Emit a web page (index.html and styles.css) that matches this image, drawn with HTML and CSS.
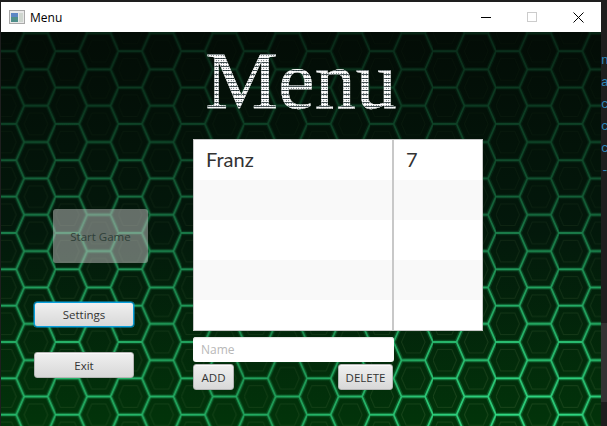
FILE: index.html
```html
<!DOCTYPE html>
<html lang="en">
<head>
<meta charset="utf-8">
<title>Menu</title>
<link rel="stylesheet" href="styles.css">
</head>
<body>
<div class="desktop">
  <div class="window">
    <header class="titlebar">
      <svg class="app-icon" width="16" height="14" viewBox="0 0 16 14">
        <rect x="0.5" y="0.5" width="15" height="13" fill="#e8e8e8" stroke="#a9a9a9"/>
        <rect x="2" y="3" width="7" height="9" fill="#4f8f8a"/>
        <rect x="2" y="3" width="7" height="4" fill="#5c86c4"/>
        <rect x="10" y="3" width="4" height="9" fill="#cfd6cf"/>
      </svg>
      <span class="window-title">Menu</span>
      <div class="controls">
        <span class="control"><svg width="10" height="10" viewBox="0 0 10 10"><path d="M0 5.5H10" stroke="#000" fill="none"/></svg></span>
        <span class="control"><svg width="10" height="10" viewBox="0 0 10 10"><rect x="0.5" y="0.5" width="9" height="9" stroke="#cccccc" fill="none"/></svg></span>
        <span class="control"><svg width="11" height="11" viewBox="0 0 11 11"><path d="M0.5 0.5L10.5 10.5M10.5 0.5L0.5 10.5" stroke="#000" fill="none"/></svg></span>
      </div>
    </header>
    <main class="scene">
      <svg class="backdrop" width="600" height="394" viewBox="0 0 600 394" aria-hidden="true">
        <defs>
          <pattern id="hex" width="62.9" height="36.35" patternUnits="userSpaceOnUse" patternTransform="translate(54.6 19.2)">
            <path d="M4.7 7.27H18.8L23.5 18.17L18.8 29.07H4.7L0 18.17Z M36.2 -10.9H50.2L55 0L50.2 10.9H36.2L31.4 0Z M36.2 25.45H50.2L55 36.35L50.2 47.25H36.2L31.4 36.35Z" fill="none" stroke="#6f8a58" stroke-opacity="0.25" stroke-width="1"/>
            <path d="M0 0H23.5L31.45 18.17H54.95L62.9 0M23.5 0L31.45 -18.17M54.95 18.17L62.9 36.35M0 36.35H23.5L31.45 18.17" fill="none" stroke="#22b868" stroke-opacity="0.35" stroke-width="4.5"/>
            <path d="M0 0H23.5L31.45 18.17H54.95L62.9 0M23.5 0L31.45 -18.17M54.95 18.17L62.9 36.35M0 36.35H23.5L31.45 18.17" fill="none" stroke="#34e88e" stroke-width="1.8"/>
          </pattern>
          <linearGradient id="fade" x1="0" y1="0" x2="0" y2="1">
            <stop offset="0" stop-color="#fff" stop-opacity="0.14"/>
            <stop offset="0.3" stop-color="#fff" stop-opacity="0.25"/>
            <stop offset="0.6" stop-color="#fff" stop-opacity="0.44"/>
            <stop offset="1" stop-color="#fff" stop-opacity="0.66"/>
          </linearGradient>
          <radialGradient id="hot" gradientUnits="userSpaceOnUse" cx="530" cy="420" r="270">
            <stop offset="0" stop-color="#fff" stop-opacity="0.9"/>
            <stop offset="1" stop-color="#fff" stop-opacity="0"/>
          </radialGradient>
          <radialGradient id="left-glow" gradientUnits="userSpaceOnUse" cx="70" cy="300" r="220">
            <stop offset="0" stop-color="#fff" stop-opacity="0.42"/>
            <stop offset="1" stop-color="#fff" stop-opacity="0"/>
          </radialGradient>
          <linearGradient id="base" x1="0" y1="0" x2="0" y2="1">
            <stop offset="0" stop-color="#030c06"/>
            <stop offset="0.5" stop-color="#03180b"/>
            <stop offset="1" stop-color="#02340a"/>
          </linearGradient>
          <mask id="glow">
            <rect width="600" height="394" fill="url(#fade)"/>
            <rect width="600" height="394" fill="url(#hot)"/>
            <rect width="600" height="394" fill="url(#left-glow)"/>
          </mask>
        </defs>
        <rect width="600" height="394" fill="url(#base)"/>
        <rect width="600" height="394" fill="url(#hex)" mask="url(#glow)"/>
      </svg>
      <div class="heading"><h1 class="title">Menu</h1></div>
      <div class="content">
        <nav class="menu">
          <button class="btn start" disabled>Start Game</button>
          <button class="btn wide focused">Settings</button>
          <button class="btn wide exit">Exit</button>
        </nav>
        <section class="panel">
          <div class="table">
            <div class="row"><span class="cell name">Franz</span><span class="cell score">7</span></div>
            <div class="row alt"><span class="cell name"></span><span class="cell score"></span></div>
            <div class="row"><span class="cell name"></span><span class="cell score"></span></div>
            <div class="row alt"><span class="cell name"></span><span class="cell score"></span></div>
            <div class="row last"><span class="cell name"></span><span class="cell score"></span></div>
          </div>
          <input class="name-input" type="text" placeholder="Name">
          <div class="actions">
            <button class="btn small add">ADD</button>
            <button class="btn small delete">DELETE</button>
          </div>
        </section>
      </div>
    </main>
  </div>
  <aside class="strip">
    <span class="frag">n</span><span class="frag">a</span><span class="frag">c</span><span class="frag">c</span><span class="frag">c</span><span class="frag">-</span>
    <div class="strip-panel"></div>
  </aside>
</div>
</body>
</html>
```
FILE: styles.css
```css
* { box-sizing: border-box; }
html, body { margin: 0; height: 100%; overflow: hidden; }
body { background: #1e1e1e; font-family: "Open Sans", "Noto Sans", sans-serif; }

.desktop { display: flex; width: 607px; height: 426px; padding: 2px 0 0 1px; }

.window { width: 600px; height: 424px; display: flex; flex-direction: column; flex: none; }

.titlebar { height: 30px; flex: none; background: #fff; display: flex; align-items: center; padding-left: 8px; }
.app-icon { flex: none; }
.window-title { margin-left: 5px; font-size: 12px; color: #000; font-family: "Open Sans", sans-serif; }
.controls { margin-left: auto; display: flex; }
.control { width: 46px; height: 30px; display: flex; align-items: center; justify-content: center; }

.scene { position: relative; flex: 1; overflow: hidden; }
.backdrop { position: absolute; left: 0; top: 0; display: block; }

.heading { position: relative; height: 107px; display: flex; justify-content: center; }
.title {
  margin: 0;
  font-family: "Liberation Serif", serif;
  font-weight: 400;
  font-size: 82px;
  line-height: 94px;
  padding-top: 2px;
  color: transparent;
  background-color: #ffffff;
  background-image:
    radial-gradient(circle, #0b1a1e 0.7px, transparent 0.8px),
    repeating-linear-gradient(0deg, rgba(8, 26, 30, 0.75) 0 1px, transparent 1px 4px);
  background-size: 2.5px 2.5px, auto;
  -webkit-background-clip: text;
  background-clip: text;
  -webkit-text-stroke: 0.25px #ffffff;
}

.content { position: relative; display: flex; padding-left: 33px; }

.menu { width: 100px; display: flex; flex-direction: column; align-items: flex-start; }

.btn {
  font-family: "Open Sans", sans-serif;
  font-size: 11.5px;
  color: #333;
  border: 1px solid #b5b5b5;
  border-radius: 3px;
  background: linear-gradient(#f0f0f0, #d8d8d8);
  padding: 0;
  box-shadow: inset 0 1px 0 #fafafa;
}
.btn.start {
  width: 95px;
  height: 54px;
  margin: 70px 0 0 19px;
  color: #2f4038;
  background: rgba(190, 190, 190, 0.52);
  border: 0;
  box-shadow: none;
}
.btn.wide { width: 100px; }
.btn.focused { height: 25px; margin-top: 39px; border: 1px solid #0a9fdc; box-shadow: 0 0 0 0.5px #0a9fdc; }
.btn.exit { height: 26px; margin-top: 25px; }

.panel { margin-left: 59px; display: flex; flex-direction: column; align-items: flex-start; }

.table { width: 290px; height: 192px; background: #fff; border: 1px solid #c8c8c8; }
.row { display: flex; height: 40px; background: #fff; }
.row.alt { background: #f9f9f9; }
.row.last { height: 30px; }
.cell { display: block; font-family: "Lato", "Open Sans", sans-serif; font-size: 20px; line-height: 38px; color: #333; padding-left: 12px; }
.cell.name { width: 200px; border-right: 2px solid #c8c8c8; }
.cell.score { flex: 1; }

.name-input {
  width: 201px;
  height: 25px;
  margin-top: 6px;
  border: 0;
  border-radius: 3px;
  padding: 0 8px;
  background: #fff;
  font-family: "Open Sans", sans-serif;
  font-size: 12px;
  color: #333;
  box-shadow: inset 0 1px 1px #e0e0e0;
}
.name-input::placeholder { color: #b8b8b8; opacity: 1; }

.actions { width: 200px; display: flex; justify-content: space-between; margin-top: 2px; }
.btn.small { height: 26px; }
.btn.add { width: 41px; }
.btn.delete { width: 55px; }

.strip { flex: 1; display: flex; flex-direction: column; align-items: flex-start; overflow: hidden; padding-top: 51px; gap: 7px; }
.frag { font-family: "Liberation Mono", monospace; font-size: 13px; line-height: 15px; color: #2f86b8; margin-left: 0; }
.strip-panel { width: 100%; height: 79px; margin-top: auto; margin-bottom: 24px; background: #333333; flex: none; }
```
